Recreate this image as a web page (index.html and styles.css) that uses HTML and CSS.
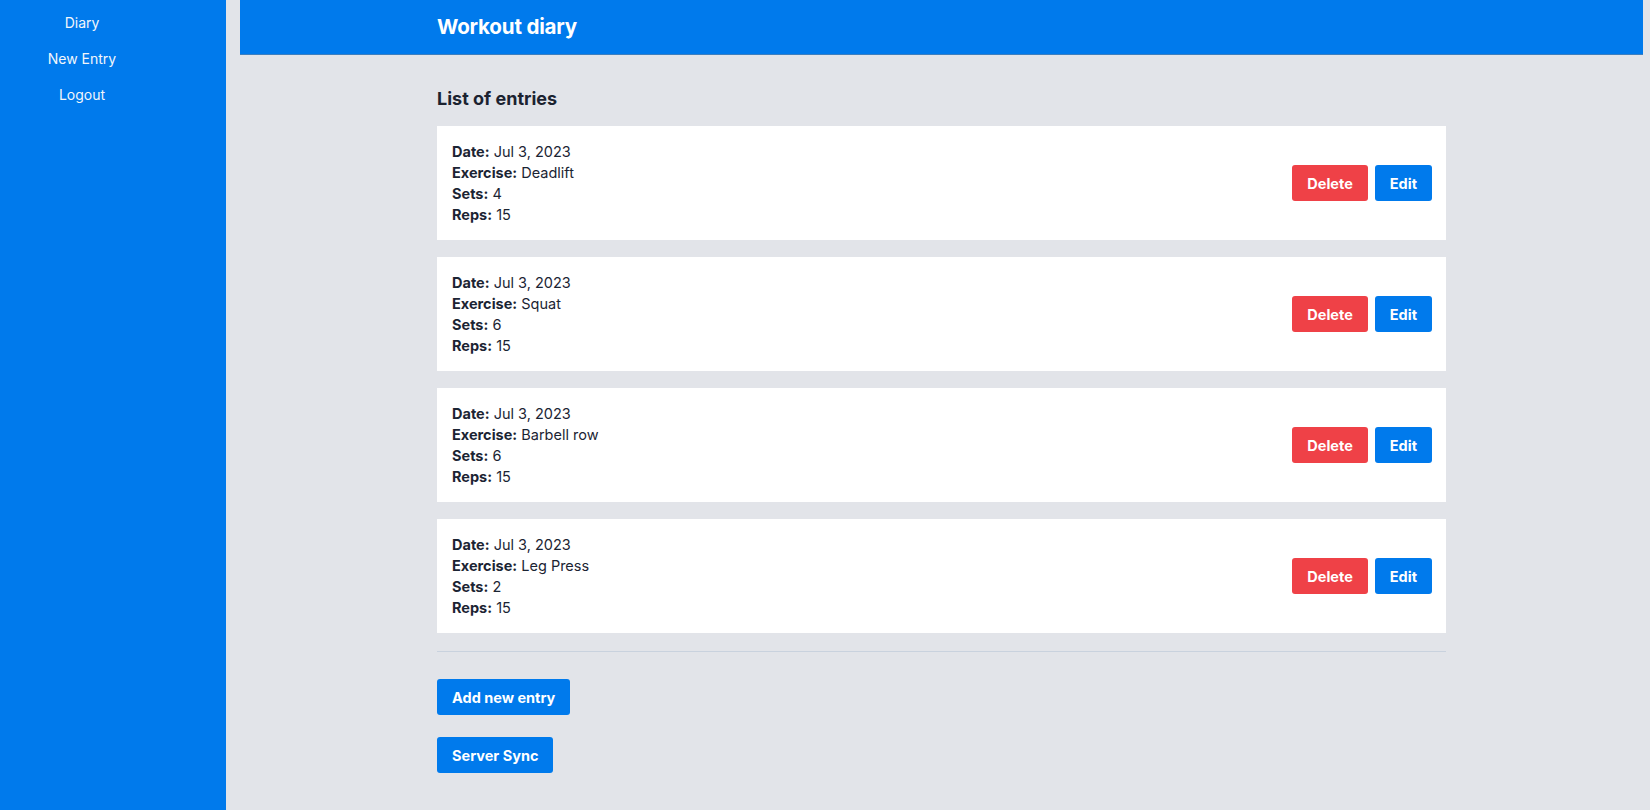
FILE: index.html
```html
<!DOCTYPE html>
<html lang="en">
<head>
<meta charset="utf-8">
<title>Workout diary</title>
<link rel="stylesheet" href="styles.css">
</head>
<body>
<div class="app">
  <aside class="sidebar">
    <nav class="nav">
      <a class="nav-link" href="#">Diary</a>
      <a class="nav-link" href="#">New Entry</a>
      <a class="nav-link" href="#">Logout</a>
    </nav>
  </aside>
  <main class="main">
    <header class="topbar">
      <div class="container">
        <h1 class="title">Workout diary</h1>
      </div>
    </header>
    <section class="container content">
      <h2 class="heading">List of entries</h2>
      <div class="list">
        <div class="card">
          <div class="info">
            <div class="line"><b>Date:</b> Jul 3, 2023</div>
            <div class="line"><b>Exercise:</b> Deadlift</div>
            <div class="line"><b>Sets:</b> 4</div>
            <div class="line"><b>Reps:</b> 15</div>
          </div>
          <div class="actions">
            <button class="btn btn-red">Delete</button>
            <button class="btn btn-blue">Edit</button>
          </div>
        </div>
        <div class="card">
          <div class="info">
            <div class="line"><b>Date:</b> Jul 3, 2023</div>
            <div class="line"><b>Exercise:</b> Squat</div>
            <div class="line"><b>Sets:</b> 6</div>
            <div class="line"><b>Reps:</b> 15</div>
          </div>
          <div class="actions">
            <button class="btn btn-red">Delete</button>
            <button class="btn btn-blue">Edit</button>
          </div>
        </div>
        <div class="card">
          <div class="info">
            <div class="line"><b>Date:</b> Jul 3, 2023</div>
            <div class="line"><b>Exercise:</b> Barbell row</div>
            <div class="line"><b>Sets:</b> 6</div>
            <div class="line"><b>Reps:</b> 15</div>
          </div>
          <div class="actions">
            <button class="btn btn-red">Delete</button>
            <button class="btn btn-blue">Edit</button>
          </div>
        </div>
        <div class="card">
          <div class="info">
            <div class="line"><b>Date:</b> Jul 3, 2023</div>
            <div class="line"><b>Exercise:</b> Leg Press</div>
            <div class="line"><b>Sets:</b> 2</div>
            <div class="line"><b>Reps:</b> 15</div>
          </div>
          <div class="actions">
            <button class="btn btn-red">Delete</button>
            <button class="btn btn-blue">Edit</button>
          </div>
        </div>
      </div>
      <div class="bottom-actions">
        <button class="btn btn-blue btn-lg">Add new entry</button>
        <button class="btn btn-blue btn-lg">Server Sync</button>
      </div>
    </section>
  </main>
</div>
</body>
</html>
```

FILE: styles.css
```css
* { box-sizing: border-box; }
html, body {
  margin: 0;
  padding: 0;
  height: 100%;
}
body {
  background: #e2e4e9;
  font-family: Inter, "Noto Sans", "Liberation Sans", sans-serif;
  color: #1b2433;
}
.app {
  display: flex;
  min-height: 810px;
}
.sidebar {
  width: 226px;
  flex: 0 0 226px;
  background: #007aec;
}
.nav {
  width: 164px;
  display: flex;
  flex-direction: column;
  align-items: center;
  padding-top: 13px;
  gap: 16px;
}
.nav-link {
  color: #f2f6fb;
  text-decoration: none;
  font-size: 14px;
  line-height: 20px;
}
.main {
  flex: 1;
  margin: 0 7px 0 14px;
}
.topbar {
  background: #007aec;
  height: 55px;
  border-bottom: 1px solid #3d7fbf;
}
.container {
  width: 1009px;
  margin: 0 auto;
}
.title {
  margin: 0;
  color: #fff;
  font-size: 20.6px;
  font-weight: 700;
  line-height: 53px;
  letter-spacing: -0.2px;
}
.content {
  padding-top: 32px;
}
.heading {
  margin: 0 0 15px;
  font-size: 18px;
  font-weight: 700;
  line-height: 24px;
  color: #1b2230;
}
.list {
  display: flex;
  flex-direction: column;
  gap: 17px;
  padding-bottom: 18px;
  border-bottom: 1px solid #c9d2de;
}
.card {
  background: #fff;
  height: 114px;
  padding: 15px 14px 15px 15px;
  display: flex;
  align-items: center;
  justify-content: space-between;
}
.info {
  align-self: flex-start;
}
.line {
  font-size: 14.5px;
  line-height: 21px;
  color: #1b2433;
}
.line b {
  font-weight: 700;
}
.actions {
  display: flex;
  gap: 7px;
}
.btn {
  border: none;
  border-radius: 3px;
  height: 36px;
  padding: 0 15px;
  color: #fff;
  font-family: Inter, "Noto Sans", "Liberation Sans", sans-serif;
  font-size: 14.5px;
  font-weight: 700;
  cursor: pointer;
}
.btn-red { background: #ef4147; }
.btn-blue { background: #007aec; }
.bottom-actions {
  display: flex;
  flex-direction: column;
  align-items: flex-start;
  gap: 22px;
  padding-top: 27px;
}
```
